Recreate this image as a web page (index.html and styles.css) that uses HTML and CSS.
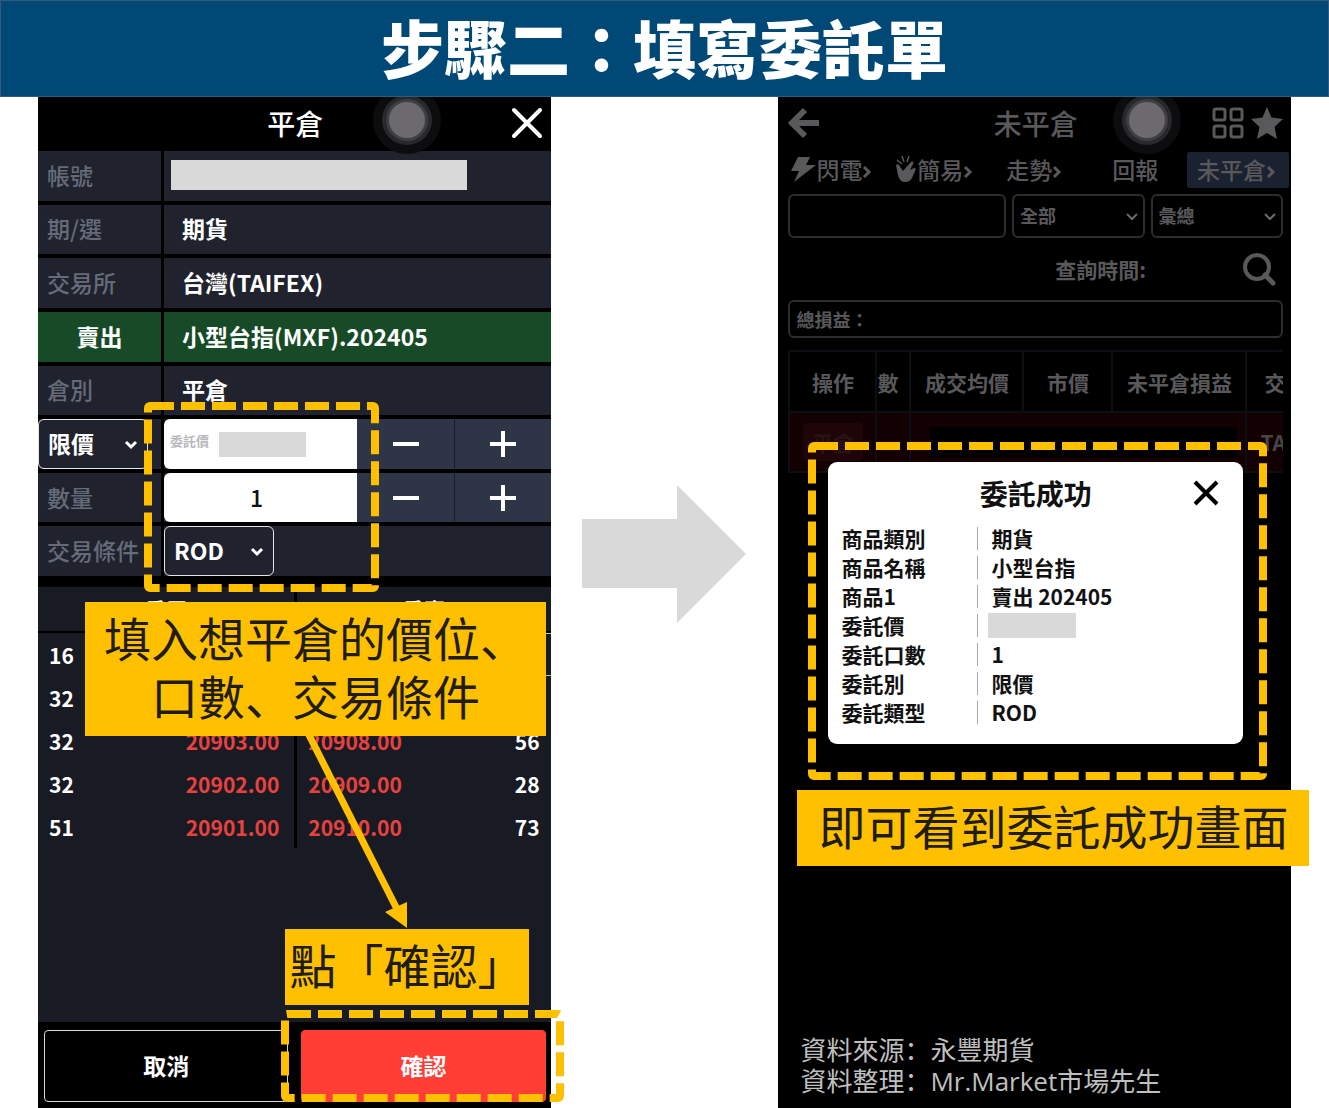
FILE: index.html
```html
<!DOCTYPE html>
<html lang="zh-Hant">
<head>
  <meta charset="UTF-8">
  <title>步驟二：填寫委託單</title>
  <meta name="viewport" content="width=device-width, initial-scale=1.0">
  <link rel="stylesheet" href="styles.css">
</head>
<body>
  <h1 class="banner">步驟二：填寫委託單</h1>

  <main class="steps">

    <!-- Left phone: order form -->
    <section class="phone order-phone">
      <header class="phone-header">
        <span></span>
        <h2>平倉</h2>
        <button type="button" class="icon-btn close-btn" aria-label="關閉">
          <svg width="32" height="32" viewBox="0 0 32 32"><path d="M3 3L29 29M29 3L3 29" stroke="#fff" stroke-width="4" stroke-linecap="round"/></svg>
        </button>
      </header>
      <div class="touch-dot"></div>

      <form class="order-form">
        <div class="row">
          <span class="name">帳號</span>
          <span class="value account"><span class="mask mask-account"></span></span>
        </div>
        <div class="row">
          <span class="name">期/選</span>
          <span class="value">期貨</span>
        </div>
        <div class="row">
          <span class="name">交易所</span>
          <span class="value">台灣(TAIFEX)</span>
        </div>
        <div class="row sell">
          <span class="name">賣出</span>
          <span class="value">小型台指(MXF).202405</span>
        </div>
        <div class="row">
          <span class="name">倉別</span>
          <span class="value">平倉</span>
        </div>
        <div class="row">
          <div class="name field">
            <div class="select-box price-type">
              <select aria-label="價格類型"><option>限價</option></select>
              <svg width="14" height="10" viewBox="0 0 14 10"><path d="M2 2l5 5 5-5" fill="none" stroke="#fff" stroke-width="3"/></svg>
            </div>
          </div>
          <div class="value stepper">
            <div class="price-box">
              <input type="text" id="price">
              <label for="price">委託價</label>
              <span class="mask mask-price"></span>
            </div>
            <button type="button" aria-label="減少價格"><svg width="28" height="28" viewBox="0 0 28 28"><path d="M1 14h26" stroke="#fff" stroke-width="4"/></svg></button>
            <button type="button" aria-label="增加價格"><svg width="28" height="28" viewBox="0 0 28 28"><path d="M1 14h26M14 1v26" stroke="#fff" stroke-width="4"/></svg></button>
          </div>
        </div>
        <div class="row">
          <label class="name" for="qty">數量</label>
          <div class="value stepper">
            <input type="text" id="qty" value="1">
            <button type="button" aria-label="減少數量"><svg width="28" height="28" viewBox="0 0 28 28"><path d="M1 14h26" stroke="#fff" stroke-width="4"/></svg></button>
            <button type="button" aria-label="增加數量"><svg width="28" height="28" viewBox="0 0 28 28"><path d="M1 14h26M14 1v26" stroke="#fff" stroke-width="4"/></svg></button>
          </div>
        </div>
        <div class="row">
          <label class="name" for="condition">交易條件</label>
          <div class="value field">
            <div class="select-box condition">
              <select id="condition"><option>ROD</option></select>
              <svg width="14" height="10" viewBox="0 0 14 10"><path d="M2 2l5 5 5-5" fill="none" stroke="#fff" stroke-width="3"/></svg>
            </div>
          </div>
        </div>
      </form>

      <div class="book">
        <table>
          <thead>
            <tr><th colspan="2">委買</th><th colspan="2">委賣</th></tr>
          </thead>
          <tbody>
            <tr><td>16</td><td></td><td class="best"></td><td class="best"></td></tr>
            <tr><td>32</td><td></td><td></td><td></td></tr>
            <tr><td>32</td><td class="price">20903.00</td><td class="price">20908.00</td><td>56</td></tr>
            <tr><td>32</td><td class="price">20902.00</td><td class="price">20909.00</td><td>28</td></tr>
            <tr><td>51</td><td class="price">20901.00</td><td class="price">20910.00</td><td>73</td></tr>
          </tbody>
        </table>
      </div>

      <footer class="actions">
        <button type="button" class="cancel">取消</button>
        <button type="button" class="confirm">確認</button>
      </footer>

      <!-- Notes over the phone -->
      <svg class="dash dash-fields" width="235" height="190"><rect x="4" y="4" width="227" height="182" rx="2"/></svg>
      <svg class="dash dash-confirm" width="283" height="92"><rect x="4" y="4" width="275" height="84" rx="2"/></svg>
      <svg class="pointer" width="110" height="200" viewBox="0 0 110 200">
        <path d="M5 0L96 180" stroke="#ffc000" stroke-width="7"/>
        <path d="M104 195L82 179L104 169Z" fill="#ffc000"/>
      </svg>
      <p class="callout callout-fields" lang="zh-Hans">填入想平倉的價位、<br>口數、交易條件</p>
      <p class="callout callout-confirm" lang="zh-Hans">點「確認」</p>
    </section>

    <div class="next-arrow">
      <svg width="164" height="138" viewBox="0 0 164 138"><path d="M0 34H95V0L164 69L95 138V103H0Z" fill="#d9d9d9"/></svg>
    </div>

    <!-- Right phone: open positions -->
    <section class="phone position-phone">
      <header class="phone-header">
        <button type="button" class="icon-btn back-btn" aria-label="返回">
          <svg width="32" height="32" viewBox="0 0 32 32"><path d="M17 3L4 16L17 29M4 16H31" fill="none" stroke="#59585b" stroke-width="6"/></svg>
        </button>
        <h2>未平倉</h2>
        <div class="header-icons">
          <button type="button" class="icon-btn" aria-label="選單">
            <svg width="32" height="32" viewBox="0 0 32 32" fill="none" stroke="#59585b" stroke-width="3"><rect x="2" y="2" width="11" height="11" rx="2"/><rect x="19" y="2" width="11" height="11" rx="2"/><rect x="2" y="19" width="11" height="11" rx="2"/><rect x="19" y="19" width="11" height="11" rx="2"/></svg>
          </button>
          <button type="button" class="icon-btn" aria-label="收藏">
            <svg width="32" height="32" viewBox="0 0 32 32"><path d="M16 0L20.500 10.500L32 12L23.500 20L26 32L16 26L6 32L8.500 20L0 12L11.500 10.500Z" fill="#59585b"/></svg>
          </button>
        </div>
      </header>
      <div class="touch-dot"></div>

      <nav class="tabs">
        <a href="#">
          <svg width="26" height="26" viewBox="0 0 26 26"><path d="M8 1H20L16 9H26L4 26L9 15H1Z" fill="#59585b"/></svg>閃電<svg class="more" width="10" height="14" viewBox="0 0 10 14"><path d="M2 2l5 5-5 5" fill="none" stroke="#59585b" stroke-width="3"/></svg>
        </a>
        <a href="#">
          <svg width="22" height="26" viewBox="0 0 22 26"><path d="M1 9c1-1 2-1 3 0l4 6 8-9c2-1 3 0 2 2l-3 6 4-2c2 0 2 2 1 3l-3 7c-2 3-4 4-7 4-4 0-6-3-7-7z" fill="#59585b"/><path d="M2 4l5 4M7 0l2 6M14 0l-2 6" stroke="#59585b" stroke-width="1.500"/></svg>簡易<svg class="more" width="10" height="14" viewBox="0 0 10 14"><path d="M2 2l5 5-5 5" fill="none" stroke="#59585b" stroke-width="3"/></svg>
        </a>
        <a href="#">走勢<svg class="more" width="10" height="14" viewBox="0 0 10 14"><path d="M2 2l5 5-5 5" fill="none" stroke="#59585b" stroke-width="3"/></svg></a>
        <a href="#">回報</a>
        <a href="#" class="active">未平倉<svg class="more" width="10" height="14" viewBox="0 0 10 14"><path d="M2 2l5 5-5 5" fill="none" stroke="#59585b" stroke-width="3"/></svg></a>
      </nav>

      <div class="filters">
        <input type="text" aria-label="帳號">
        <div class="select-box">
          <select aria-label="範圍"><option>全部</option></select>
          <svg width="12" height="9" viewBox="0 0 12 9"><path d="M1 2l5 5 5-5" fill="none" stroke="#6a696c" stroke-width="2"/></svg>
        </div>
        <div class="select-box">
          <select aria-label="顯示"><option>彙總</option></select>
          <svg width="12" height="9" viewBox="0 0 12 9"><path d="M1 2l5 5 5-5" fill="none" stroke="#6a696c" stroke-width="2"/></svg>
        </div>
      </div>

      <div class="query">
        <span>查詢時間:</span>
        <button type="button" class="icon-btn" aria-label="查詢">
          <svg width="34" height="34" viewBox="0 0 34 34" fill="none" stroke="#59585b"><circle cx="15" cy="15" r="12" stroke-width="4"/><path d="M23 23l8 8" stroke-width="5" stroke-linecap="round"/></svg>
        </button>
      </div>

      <div class="total">總損益：</div>

      <div class="positions">
        <table>
          <thead>
            <tr>
              <th class="col-action">操作</th>
              <th class="col-lots">數</th>
              <th class="col-avg">成交均價</th>
              <th class="col-market">市價</th>
              <th class="col-profit">未平倉損益</th>
              <th class="col-exchange">交易</th>
            </tr>
          </thead>
          <tbody>
            <tr>
              <td><button type="button">平倉</button></td>
              <td></td>
              <td colspan="3"><span class="mask-dark"></span></td>
              <td class="exchange">TAIFEX</td>
            </tr>
          </tbody>
        </table>
      </div>

      <div class="modal" role="dialog" aria-labelledby="modal-title">
        <header class="modal-header">
          <span></span>
          <h3 id="modal-title">委託成功</h3>
          <button type="button" class="icon-btn" aria-label="關閉">
            <svg width="26" height="26" viewBox="0 0 26 26"><path d="M2 2L24 24M24 2L2 24" stroke="#000" stroke-width="4"/></svg>
          </button>
        </header>
        <dl>
          <dt>商品類別</dt><dd>期貨</dd>
          <dt>商品名稱</dt><dd>小型台指</dd>
          <dt>商品1</dt><dd>賣出 202405</dd>
          <dt>委託價</dt><dd class="masked"><span class="mask mask-deal"></span></dd>
          <dt>委託口數</dt><dd>1</dd>
          <dt>委託別</dt><dd>限價</dd>
          <dt>委託類型</dt><dd>ROD</dd>
        </dl>
      </div>

      <footer class="source" lang="zh-Hans">
        <p>資料來源：永豐期貨</p>
        <p>資料整理：Mr.Market市場先生</p>
      </footer>

      <svg class="dash dash-modal" width="459" height="338"><rect x="4" y="4" width="451" height="330" rx="2"/></svg>
      <p class="callout callout-done" lang="zh-Hans">即可看到委託成功畫面</p>
    </section>

  </main>
</body>
</html>
```
FILE: styles.css
```css
* {
  margin: 0;
  padding: 0;
  box-sizing: border-box;
}

body {
  min-height: 100vh;
  display: flex;
  flex-direction: column;
  background: #fff;
  font-family: "Noto Sans CJK TC", sans-serif;
}

button, input, select {
  font: inherit;
  color: inherit;
  background: none;
  border: none;
}

svg {
  display: block;
  flex: none;
}

.banner {
  position: relative;
  z-index: 1;
  height: 97px;
  line-height: 89px;
  background: #004977;
  border: 1px solid #35597a;
  color: #fff;
  font-size: 63px;
  font-weight: 900;
  text-align: center;
}

.steps {
  flex: 1;
  display: grid;
  grid-template-columns: minmax(0, 9fr) minmax(0, 4fr) minmax(0, 9fr);
  padding: 0 38px;
}

.phone {
  position: relative;
  display: flex;
  flex-direction: column;
  background: #000;
  color: #fff;
  font-size: 23px;
  font-weight: 700;
}

.phone-header {
  display: grid;
  grid-template-columns: 1fr auto 1fr;
  align-items: center;
  height: 54px;
  padding: 0 8px 2px 10px;
}

.phone-header h2 {
  font-size: 28px;
  font-weight: 500;
}

.icon-btn {
  display: block;
  cursor: pointer;
}

.close-btn {
  justify-self: end;
}

/* Assistive touch button */
.touch-dot {
  position: absolute;
  top: 5px;
  left: 351px;
  width: 36px;
  height: 36px;
  border-radius: 50%;
  background: #6c6a6e;
  box-shadow: 0 0 0 3px #3f3f41, 0 0 0 7px #29292b, 0 0 0 16px #0d0d0f;
}

.mask {
  display: block;
  background: #d9d9d9;
}

/* Order form */
.order-form {
  display: grid;
  grid-auto-rows: 1fr;
  gap: 4px;
  height: 425px;
}

.row {
  display: grid;
  grid-template-columns: 123px 1fr;
  gap: 3px;
  min-height: 0;
}

.name, .value {
  display: flex;
  align-items: center;
  padding-bottom: 2px;
  background: #20232e;
}

.name {
  padding-left: 9px;
  color: #666b7a;
  font-weight: 500;
}

.value {
  padding-left: 18px;
}

.sell .name, .sell .value {
  background: #174a26;
  color: #fff;
  font-weight: 700;
}

.sell .name {
  justify-content: center;
  padding-left: 0;
}

.value.account {
  padding-left: 7px;
}

.mask-account {
  width: 296px;
  height: 30px;
}

.name.field, .value.field, .value.stepper {
  padding: 0;
  color: #fff;
  font-weight: 700;
  align-items: stretch;
}

.select-box {
  position: relative;
  border: 1px solid #e4e4e6;
  border-radius: 6px;
}

.select-box select {
  width: 100%;
  height: 100%;
  padding: 0 0 2px 9px;
  appearance: none;
}

.select-box svg {
  position: absolute;
  top: 50%;
  right: 9px;
  margin-top: -4px;
  pointer-events: none;
}

.price-type, .condition {
  width: 110px;
}

.value.stepper {
  display: grid;
  grid-template-columns: 2fr 1fr 1fr;
}

.stepper input {
  width: 100%;
  height: 100%;
  padding: 0 8px 2px 0;
  background: #fff;
  color: #111;
  border-radius: 6px 0 0 6px;
  font-weight: 500;
  text-align: center;
}

.stepper button {
  display: flex;
  align-items: center;
  justify-content: center;
  background: #2e3546;
}

.stepper button:last-child {
  border-left: 1px solid #191c26;
}

.price-box {
  position: relative;
}

.price-box label {
  position: absolute;
  top: 12px;
  left: 6px;
  color: #b9b9bd;
  font-size: 13px;
}

.mask-price {
  position: absolute;
  top: 13px;
  left: 55px;
  width: 87px;
  height: 25px;
}

/* Order book */
.book {
  flex: 1;
  margin-top: 11px;
  background: #181a24;
}

.book table {
  width: 100%;
  border-collapse: separate;
  border-spacing: 0;
  table-layout: fixed;
  font-size: 21px;
}

.book th {
  height: 46px;
  border-bottom: 2px solid #000;
}

.book td {
  height: 43px;
  padding: 0 11px;
}

.book td:nth-child(2),
.book td:nth-child(4) {
  text-align: right;
}

.book td:nth-child(2) {
  padding-right: 15px;
}

.book td:nth-child(3), .book th:nth-child(2) {
  border-left: 3px solid #000;
}

.book td.price {
  color: #e8423f;
}

.book td.best {
  border-top: 1px solid #b5d46a;
  border-bottom: 1px solid #b5d46a;
}

.actions {
  display: grid;
  grid-template-columns: 1fr 1fr;
  gap: 13px;
  height: 86px;
  padding: 8px 5px 6px 6px;
}

.actions button {
  padding-bottom: 2px;
  border: 1px solid #d8d8d8;
  border-radius: 4px;
}

.actions .confirm {
  background: #ff3e36;
  border-color: #ff3e36;
}

/* Yellow notes */
.dash, .pointer, .callout {
  position: absolute;
}

.dash {
  fill: none;
  stroke: #ffc000;
  stroke-width: 8px;
  stroke-dasharray: 24 7;
}

.callout {
  background: #ffc000;
  color: #201d10;
  font-family: "Noto Sans CJK SC", sans-serif;
  font-size: 47px;
  font-weight: 400;
  line-height: 58px;
  text-align: center;
  white-space: nowrap;
  padding: 6px 0 12px;
}

.dash-fields {
  top: 305px;
  left: 106px;
}

.dash-confirm {
  top: 913px;
  left: 243px;
}

.dash-modal {
  top: 345px;
  left: 30px;
}

.pointer {
  top: 636px;
  left: 265px;
}

.callout-fields {
  top: 505px;
  left: 47px;
  width: 461px;
}

.callout-confirm {
  top: 832px;
  left: 247px;
  width: 244px;
}

.callout-done {
  top: 693px;
  left: 19px;
  width: 512px;
}

.next-arrow {
  display: flex;
  justify-content: center;
  align-items: flex-start;
  padding-top: 388px;
}

/* Open positions, dimmed behind the dialog */
.position-phone {
  color: #59585b;
}

.header-icons {
  display: flex;
  justify-content: flex-end;
  gap: 7px;
}

.tabs {
  display: grid;
  grid-template-columns: 105fr 111fr 106fr 75fr 102fr;
  height: 33px;
  margin-top: 1px;
  padding: 0 2px 0 12px;
  font-weight: 500;
}

.tabs a {
  display: flex;
  align-items: center;
  padding-bottom: 2px;
  color: inherit;
  text-decoration: none;
  white-space: nowrap;
}

.tabs .more {
  margin-top: 6px;
}

.tabs .active {
  padding-left: 10px;
  border-radius: 2px;
  background: #1a2130;
}

.filters {
  display: grid;
  grid-template-columns: 217fr 132fr 132fr;
  gap: 6px;
  height: 44px;
  margin: 9px 8px 0 10px;
  font-size: 18px;
}

.filters input, .filters .select-box, .total {
  min-width: 0;
  border: 2px solid #2d2c2e;
  border-radius: 6px;
}

.filters .select-box select {
  padding-left: 6px;
}

.filters .select-box svg {
  right: 5px;
}

.query {
  display: flex;
  justify-content: flex-end;
  align-items: center;
  gap: 96px;
  height: 62px;
  padding-right: 15px;
  font-size: 21px;
}

.total {
  height: 38px;
  margin: 0 8px 0 10px;
  padding-left: 6px;
  font-size: 18px;
  line-height: 34px;
}

.positions {
  margin: 12px 8px 0 10px;
  overflow: hidden;
}

.positions table {
  width: 540px;
  table-layout: fixed;
  border-collapse: collapse;
  font-size: 21px;
}

.positions th, .positions td {
  height: 61px;
  border: 2px solid #0d0e14;
  white-space: nowrap;
}

.positions td {
  background: #120003;
  height: 60px;
}

.positions .col-action { width: 87px; }
.positions .col-lots { width: 34px; }
.positions .col-avg { width: 113px; }
.positions .col-market { width: 89px; }
.positions .col-profit { width: 134px; }

.positions .col-lots {
  text-align: left;
}

.positions .col-exchange {
  padding-left: 17px;
  text-align: left;
}

.positions .exchange {
  padding-left: 13px;
  color: #4a4346;
}

.positions td button {
  display: block;
  width: 60px;
  height: 38px;
  margin: auto;
  border-radius: 4px;
  background: #200508;
  color: #2a1215;
}

.mask-dark {
  display: block;
  height: 30px;
  margin: 0 8px 0 19px;
  background: #000;
}

.modal {
  position: absolute;
  top: 365px;
  left: 50px;
  right: 48px;
  padding-bottom: 17px;
  border-radius: 9px;
  background: #fff;
  color: #111;
}

.modal-header {
  display: grid;
  grid-template-columns: 1fr auto 1fr;
  align-items: center;
  height: 62px;
  padding: 0 24px;
}

.modal-header h3 {
  font-size: 28px;
  font-weight: 700;
}

.modal-header .icon-btn {
  justify-self: end;
}

.modal dl {
  display: grid;
  grid-template-columns: 136px 1fr;
  padding-left: 13px;
  font-size: 21px;
  line-height: 29px;
}

.modal dd {
  display: flex;
  align-items: center;
}

.modal dd::before {
  content: "";
  width: 1px;
  height: 23px;
  margin-right: 13px;
  background: #a8a8ac;
}

.modal .masked::before {
  margin-right: 10px;
}

.mask-deal {
  width: 88px;
  height: 25px;
}

.source {
  margin-top: auto;
  padding: 0 22px 11px;
  color: #bfbfbf;
  font-family: "Open Sans", "Noto Sans CJK SC", sans-serif;
  font-size: 26px;
  font-weight: 400;
  line-height: 31px;
}
```
